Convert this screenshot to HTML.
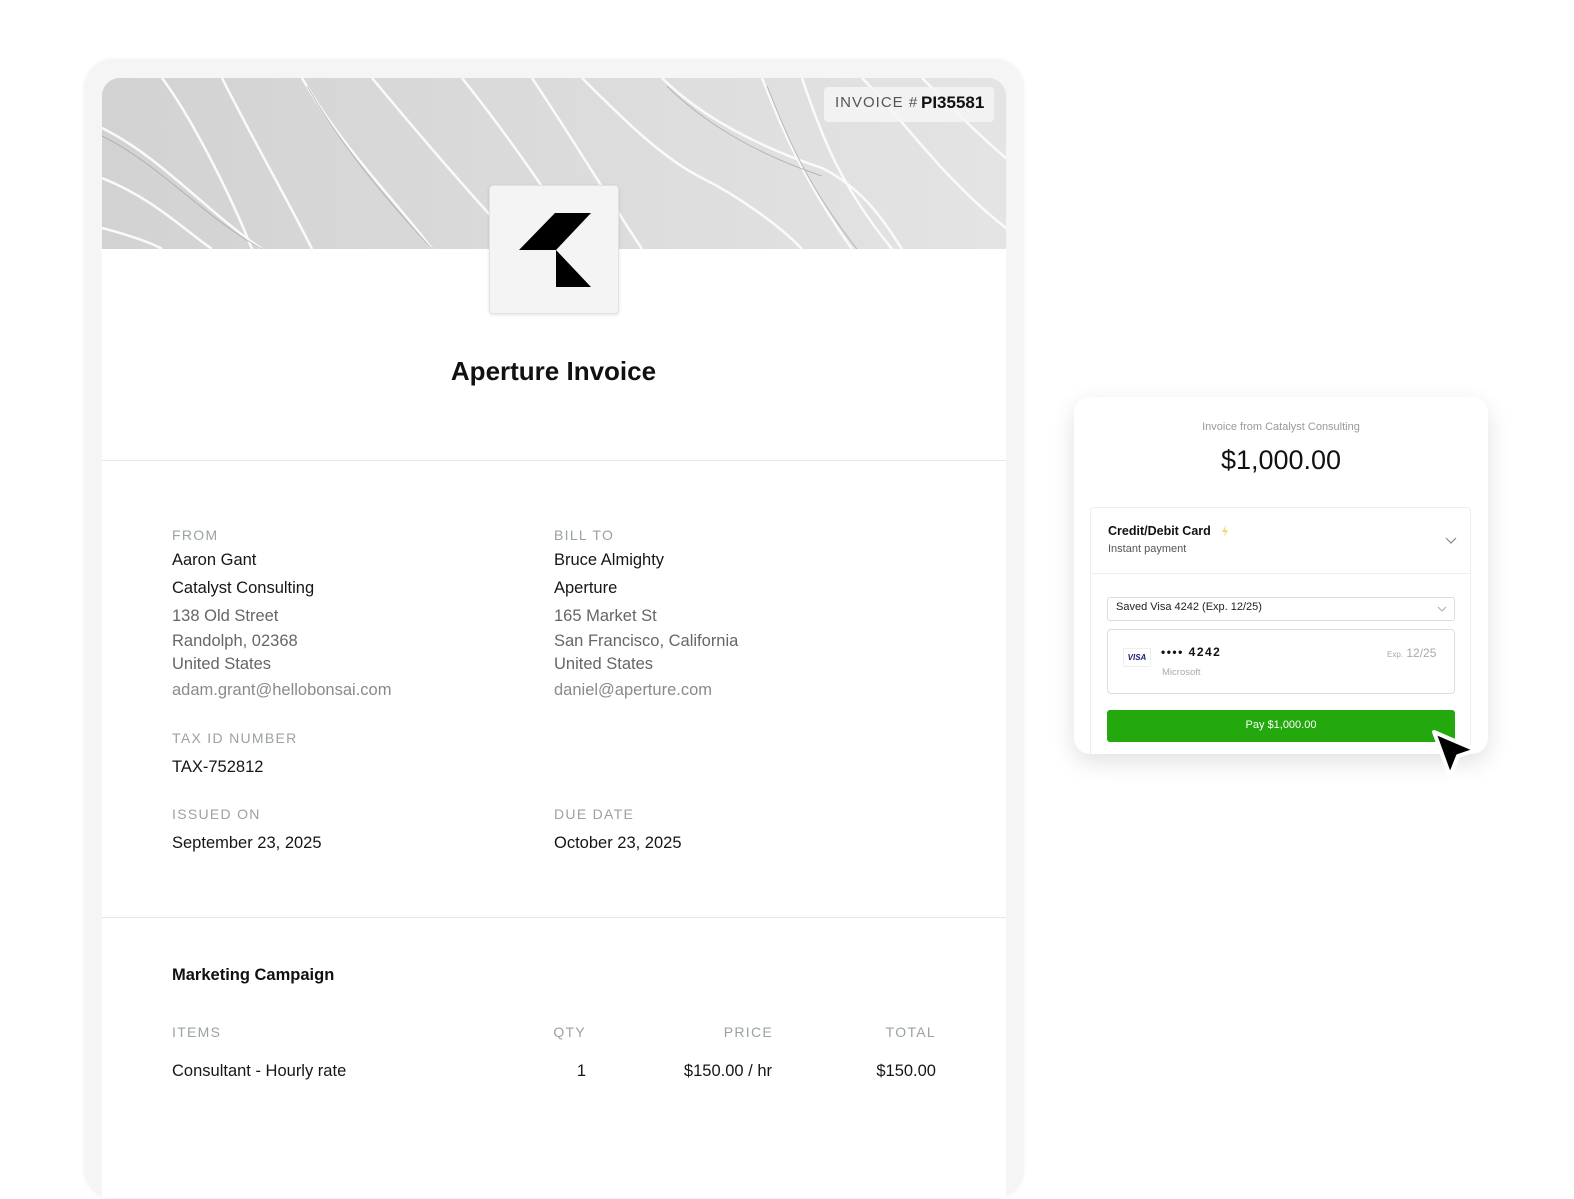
<!DOCTYPE html>
<html><head><meta charset="utf-8"><style>
*{margin:0;padding:0;box-sizing:border-box}
body{width:1574px;height:1181px;background:#fff;font-family:"Liberation Sans",sans-serif;position:relative;overflow:hidden;color:#111}
.a{position:absolute;white-space:nowrap}
.lbl{font-size:14px;letter-spacing:1.3px;color:#9aa39e}
.v{font-size:16.5px;color:#161616}
.g{font-size:16.5px;color:#666}
.e{font-size:16.5px;color:#8a8a8a}
.r{text-align:right}
</style></head><body>
<div class="a" style="left:84px;top:59px;width:940px;height:1140px;background:#f5f5f5;border-radius:30px;box-shadow:0 0 4px rgba(0,0,0,0.06)"></div>
<div class="a" style="left:102px;top:78px;width:904px;height:1120px;background:#fff;border-radius:18px 18px 0 0;overflow:hidden">
<svg width="904" height="171" style="display:block;background:#d9d9d9">
<defs><linearGradient id="gr" x1="0" x2="1"><stop offset="0" stop-color="#d2d2d2"/><stop offset="1" stop-color="#e4e4e4"/></linearGradient></defs>
<rect width="904" height="171" fill="url(#gr)"/>
<g fill="none" stroke="#fafafa" stroke-width="2.5">
<path d="M0 50 C60 80 100 130 160 171"/>
<path d="M0 100 C50 120 80 150 110 171"/>
<path d="M0 150 C30 158 50 165 60 171"/>
<path d="M60 0 C90 40 130 120 150 171"/>
<path d="M120 0 C150 60 190 130 210 171"/>
<path d="M200 0 C240 70 300 130 330 171"/>
<path d="M270 0 C320 60 380 130 420 171"/>
<path d="M360 0 C400 50 450 120 480 171"/>
<path d="M430 0 C470 60 500 110 540 171"/>
<path d="M480 0 C520 40 560 80 600 100 C640 120 680 150 700 171"/>
<path d="M560 0 C600 40 660 70 720 90 C760 110 780 140 800 171"/>
<path d="M660 0 C680 50 700 100 750 171"/>
<path d="M700 0 C720 60 740 110 790 171"/>
<path d="M760 0 C800 40 840 100 904 150"/>
<path d="M820 0 C850 30 880 60 904 80"/>
</g>
<g fill="none" stroke="#999" stroke-width="1" opacity=".6">
<path d="M0 58 C60 88 100 138 160 171"/><path d="M205 8 C245 78 300 138 330 171"/><path d="M565 8 C605 48 660 78 720 98"/><path d="M665 8 C685 58 705 108 755 171"/>
</g>
</svg>
<div style="position:absolute;left:0;top:382px;width:904px;height:1px;background:#e8e8e8"></div>
<div style="position:absolute;left:0;top:839px;width:904px;height:1px;background:#e8e8e8"></div>
</div>
<div class="a" style="left:824px;top:87px;width:170px;height:35px;background:rgba(245,245,245,0.85);border-radius:4px"></div>
<div class="a" style="left:835px;top:94px;font-size:15px;letter-spacing:1px;color:#555">INVOICE #</div>
<div class="a" style="left:921px;top:93px;font-size:17px;font-weight:bold;color:#111">PI35581</div>
<div class="a" style="left:489px;top:185px;width:130px;height:129px;background:#f4f4f4;border:1px solid #e2e2e2;border-radius:4px;box-shadow:0 1px 3px rgba(0,0,0,0.12)"></div>
<svg class="a" style="left:0;top:0" width="1574" height="400"><polygon points="555,213 591,213 556,250 519,250" fill="#000"/><polygon points="556,250 591,287 556,287" fill="#000"/></svg>
<div class="a" style="left:0;width:1107px;top:356px;text-align:center;font-size:26px;font-weight:600;color:#111">Aperture Invoice</div>

<div class="a lbl" style="left:172px;top:527px">FROM</div>
<div class="a v" style="left:172px;top:551px">Aaron Gant</div>
<div class="a v" style="left:172px;top:579px">Catalyst Consulting</div>
<div class="a g" style="left:172px;top:607px">138 Old Street</div>
<div class="a g" style="left:172px;top:632px">Randolph, 02368</div>
<div class="a g" style="left:172px;top:655px">United States</div>
<div class="a e" style="left:172px;top:681px">adam.grant@hellobonsai.com</div>
<div class="a lbl" style="left:554px;top:527px">BILL TO</div>
<div class="a v" style="left:554px;top:551px">Bruce Almighty</div>
<div class="a v" style="left:554px;top:579px">Aperture</div>
<div class="a g" style="left:554px;top:607px">165 Market St</div>
<div class="a g" style="left:554px;top:632px">San Francisco, California</div>
<div class="a g" style="left:554px;top:655px">United States</div>
<div class="a e" style="left:554px;top:681px">daniel@aperture.com</div>
<div class="a lbl" style="left:172px;top:730px">TAX ID NUMBER</div>
<div class="a v" style="left:172px;top:758px">TAX-752812</div>
<div class="a lbl" style="left:172px;top:806px">ISSUED ON</div>
<div class="a v" style="left:172px;top:834px">September 23, 2025</div>
<div class="a lbl" style="left:554px;top:806px">DUE DATE</div>
<div class="a v" style="left:554px;top:834px">October 23, 2025</div>

<div class="a" style="left:172px;top:966px;font-size:16.5px;font-weight:bold;color:#111">Marketing Campaign</div>
<div class="a lbl" style="left:172px;top:1024px">ITEMS</div>
<div class="a lbl r" style="left:486px;width:100px;top:1024px">QTY</div>
<div class="a lbl r" style="left:673px;width:100px;top:1024px">PRICE</div>
<div class="a lbl r" style="left:836px;width:100px;top:1024px">TOTAL</div>
<div class="a v" style="left:172px;top:1062px">Consultant - Hourly rate</div>
<div class="a v r" style="left:486px;width:100px;top:1062px">1</div>
<div class="a v r" style="left:622px;width:150px;top:1062px">$150.00 / hr</div>
<div class="a v r" style="left:786px;width:150px;top:1062px">$150.00</div>

<div class="a" style="left:1074px;top:397px;width:414px;height:357px;background:#fff;border-radius:16px;box-shadow:0 8px 24px rgba(0,0,0,0.12)"></div>
<div class="a" style="left:1074px;width:414px;top:421px;text-align:center;font-size:11px;color:#999">Invoice from Catalyst Consulting</div>
<div class="a" style="left:1074px;width:414px;top:445px;text-align:center;font-size:27px;color:#111">$1,000.00</div>
<div class="a" style="left:1090px;top:507px;width:381px;height:247px;border:1px solid #eee;border-bottom:none;border-radius:4px 4px 0 0"></div>
<div class="a" style="left:1090px;top:573px;width:381px;height:1px;background:#eee"></div>
<div class="a" style="left:1108px;top:524px;font-size:12.5px;font-weight:bold;color:#111">Credit/Debit Card</div>
<svg class="a" style="left:1221px;top:525px" width="8" height="12"><path d="M5 0 L1 7 L4 7 L3 12 L7 5 L4 5 Z" fill="#f3d77a"/></svg>
<div class="a" style="left:1108px;top:543px;font-size:11px;color:#555">Instant payment</div>
<svg class="a" style="left:1445px;top:537px" width="12" height="8"><path d="M1 1 L6 6 L11 1" fill="none" stroke="#888" stroke-width="1.2"/></svg>
<div class="a" style="left:1107px;top:597px;width:348px;height:24px;border:1px solid #ddd;border-radius:3px"></div>
<div class="a" style="left:1116px;top:601px;font-size:11px;color:#222">Saved Visa 4242 (Exp. 12/25)</div>
<svg class="a" style="left:1437px;top:606px" width="10" height="6"><path d="M1 1 L5 5 L9 1" fill="none" stroke="#aaa" stroke-width="1"/></svg>
<div class="a" style="left:1107px;top:629px;width:348px;height:65px;border:1px solid #ddd;border-radius:4px"></div>
<div class="a" style="left:1123px;top:648px;width:28px;height:19px;border:1px solid #eee;font-size:8px;font-weight:bold;font-style:italic;color:#1a1f71;text-align:center;line-height:17px">VISA</div>
<div class="a" style="left:1161px;top:645px;font-size:12px;font-weight:bold;letter-spacing:1.5px;color:#111">•••• 4242</div>
<div class="a" style="left:1162px;top:667px;font-size:9.5px;color:#aaa">Microsoft</div>
<div class="a" style="left:1387px;top:646px;font-size:12px;color:#aaa"><span style="font-size:8px">Exp.</span> 12/25</div>
<div class="a" style="left:1107px;top:710px;width:348px;height:32px;background:#23a80d;border-radius:3px;color:#fff;font-size:11px;text-align:center;line-height:31px">Pay $1,000.00</div>
<svg class="a" style="left:1426px;top:726px" width="60" height="60"><path d="M8 6 L50 24 L32 30 L24 50 Z" fill="#000" stroke="#fff" stroke-width="4" stroke-linejoin="round"/></svg>
</body></html>
